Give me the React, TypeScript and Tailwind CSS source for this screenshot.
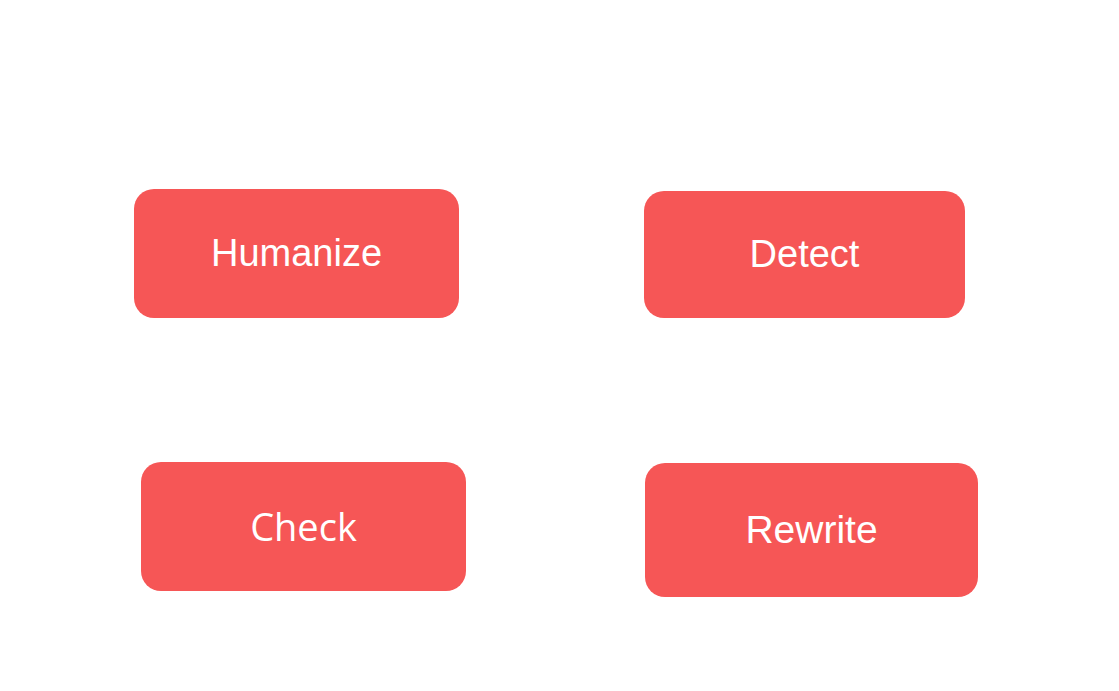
export default function App() {
  const btn =
    "rounded-[20px] bg-[#f65656] text-white flex items-center justify-center";
  return (
    <div className="w-[1119px] h-[691px] bg-white flex flex-col pt-[189px] font-['Liberation_Sans',Arial,sans-serif]">
      <div className="flex items-start pl-[134px]">
        <button className={`${btn} w-[325px] h-[129px] text-[38px]`}>Humanize</button>
        <button className={`${btn} ml-[185px] mt-[2px] w-[321px] h-[127px] text-[38px]`}>Detect</button>
      </div>
      <div className="flex items-start pl-[141px] mt-[144px]">
        <button className={`${btn} w-[325px] h-[129px] text-[38px] font-['Open_Sans',sans-serif]`}>Check</button>
        <button className={`${btn} ml-[179px] mt-[1px] w-[333px] h-[134px] text-[39px]`}>Rewrite</button>
      </div>
    </div>
  );
}
